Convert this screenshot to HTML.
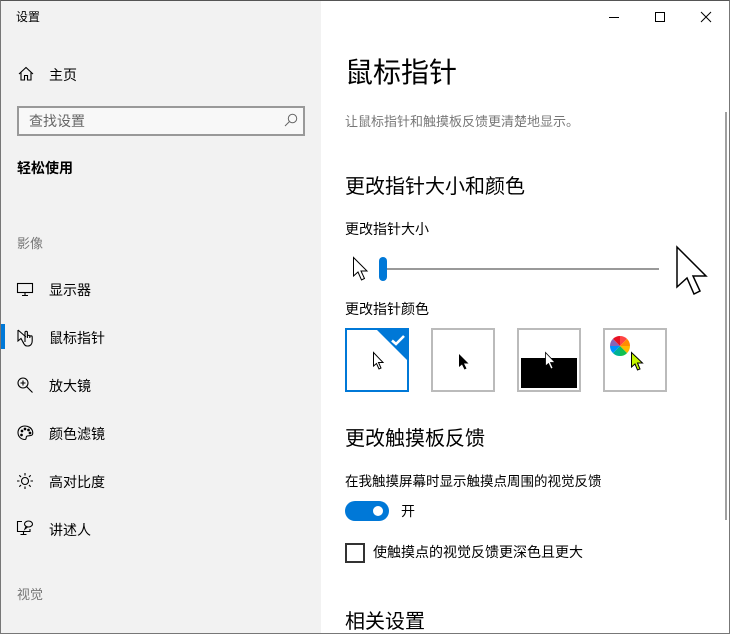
<!DOCTYPE html>
<html><head><meta charset="utf-8"><style>
*{margin:0;padding:0;box-sizing:border-box}
body{width:730px;height:634px;overflow:hidden;font-family:"Liberation Sans","Noto Sans CJK SC",sans-serif;color:#000;background:#fff;position:relative}
.frame{position:absolute;left:0;top:0;width:730px;height:634px;border:1px solid #777;border-top:1px solid #555}
.left{position:absolute;left:1px;top:1px;width:320px;height:632px;background:#f2f2f2}
.t{position:absolute;white-space:nowrap;line-height:1}
svg{position:absolute;overflow:visible}
</style></head><body>
<div class="left"></div>
<div class="t" style="left:16px;top:11px;font-size:12px">设置</div>
<svg style="left:18px;top:66px" width="16" height="16" viewBox="0 0 16 16" fill="none" stroke="#000" stroke-width="1.1"><path d="M1 8L8 1.5L15 8M3 6.5V14H6.5V9.5H9.5V14H13V6.5"/></svg>
<div class="t" style="left:49px;top:68px;font-size:14px">主页</div>
<div style="position:absolute;left:17px;top:106px;width:288px;height:30px;border:2px solid #999;background:#f8f8f8"></div>
<div class="t" style="left:29px;top:114px;font-size:14px;color:#666">查找设置</div>
<svg style="left:284px;top:113px" width="14" height="14" viewBox="0 0 14 14" fill="none" stroke="#666" stroke-width="1"><circle cx="8.5" cy="5.5" r="4.2"/><path d="M5.5 8.5L1 13"/></svg>
<div class="t" style="left:17px;top:161px;font-size:14px;font-weight:bold">轻松使用</div>
<div class="t" style="left:17px;top:237px;font-size:13px;color:#777">影像</div>
<svg style="left:17px;top:283px" width="17" height="14" viewBox="0 0 17 14" fill="none" stroke="#000" stroke-width="1.1"><rect x="0.5" y="0.5" width="15" height="9"/><path d="M8 9.5V12.5M5 12.5H11"/></svg>
<div class="t" style="left:49px;top:283px;font-size:14px">显示器</div>
<div style="position:absolute;left:1px;top:324px;width:4px;height:25px;background:#0078d7"></div>
<svg style="left:17px;top:329px" width="18" height="18" viewBox="0 0 18 18" fill="none" stroke="#000" stroke-width="1.1"><path d="M1 1L1 12L4 9.5L6.5 14M1 1L9 8"/><path d="M8 13V3.5A1.2 1.2 0 0 1 10.4 3.5V9M10.4 7.5A1.2 1.2 0 0 1 12.8 7.5V9M12.8 8A1.2 1.2 0 0 1 15.2 8V12C15.2 15 13.5 17 11 17H10C8.5 17 7 15.5 6 13"/></svg>
<div class="t" style="left:49px;top:331px;font-size:14px">鼠标指针</div>
<svg style="left:17px;top:377px" width="17" height="17" viewBox="0 0 17 17" fill="none" stroke="#000" stroke-width="1.1"><circle cx="6" cy="6" r="5"/><path d="M9.5 9.5L15.5 15.5M6 3.5V8.5M3.5 6H8.5"/></svg>
<div class="t" style="left:49px;top:379px;font-size:14px">放大镜</div>
<svg style="left:17px;top:425px" width="17" height="16" viewBox="0 0 17 16" fill="none" stroke="#000" stroke-width="1.1"><path d="M8 1C3.5 1 1 4 1 7.5C1 11 3.5 14.5 8 14.5C9.5 14.5 9 12.5 9.5 11.5C10 10.5 12 11 14 10.5C16 10 16 8 15.5 6C14.5 3 11.5 1 8 1Z"/><circle cx="5" cy="6" r="0.8" fill="#000"/><circle cx="8" cy="4" r="0.8" fill="#000"/><circle cx="11.5" cy="5" r="0.8" fill="#000"/><circle cx="4.5" cy="10" r="0.8" fill="#000"/><circle cx="13" cy="8" r="0.8" fill="#000"/></svg>
<div class="t" style="left:49px;top:427px;font-size:14px">颜色滤镜</div>
<svg style="left:17px;top:473px" width="16" height="16" viewBox="0 0 16 16" fill="none" stroke="#000" stroke-width="1.1"><circle cx="8" cy="8" r="3.5"/><path d="M8 0V2.5M8 13.5V16M0 8H2.5M13.5 8H16M2.3 2.3L4 4M12 12L13.7 13.7M13.7 2.3L12 4M4 12L2.3 13.7"/></svg>
<div class="t" style="left:49px;top:475px;font-size:14px">高对比度</div>
<svg style="left:17px;top:520px" width="17" height="17" viewBox="0 0 17 17" fill="none" stroke="#000" stroke-width="1.1"><path d="M5 1.5H0.5V11.5H13V9"/><path d="M6.5 11.5V14.5M3.5 14.5H9.5"/><ellipse cx="11.5" cy="4" rx="4" ry="3"/><path d="M9 6.5L8 9L10.5 7"/></svg>
<div class="t" style="left:49px;top:523px;font-size:14px">讲述人</div>
<div class="t" style="left:17px;top:588px;font-size:13px;color:#777">视觉</div>

<div style="position:absolute;left:609px;top:17px;width:10px;height:1px;background:#000"></div>
<div style="position:absolute;left:655px;top:12px;width:10px;height:10px;border:1px solid #000"></div>
<svg style="left:701px;top:12px" width="10" height="10" viewBox="0 0 10 10" stroke="#000" stroke-width="1"><path d="M0 0L10 10M10 0L0 10"/></svg>
<div style="position:absolute;left:725px;top:112px;width:2px;height:408px;background:#a0a0a0"></div>

<div class="t" style="left:345px;top:59px;font-size:28px">鼠标指针</div>
<div class="t" style="left:345px;top:115px;font-size:13px;color:#777">让鼠标指针和触摸板反馈更清楚地显示。</div>
<div class="t" style="left:345px;top:177px;font-size:20px">更改指针大小和颜色</div>
<div class="t" style="left:345px;top:222px;font-size:14px">更改指针大小</div>
<svg style="left:353px;top:257px" width="16" height="24" viewBox="0 0 16 24" fill="#fff" stroke="#000" stroke-width="1"><path d="M0.5 0.5V19L5 15L8.5 23L11.5 21.5L8 14H14Z"/></svg>
<div style="position:absolute;left:383px;top:268px;width:276px;height:2px;background:#999"></div>
<div style="position:absolute;left:379px;top:257px;width:8px;height:24px;border-radius:4px;background:#0078d7"></div>
<svg style="left:676px;top:246px" width="32" height="50" viewBox="0 0 32 50" fill="#fff" stroke="#000" stroke-width="1.5"><path d="M1 1V41L11 32L18 48L24 45L17 30H30Z"/></svg>
<div class="t" style="left:345px;top:302px;font-size:14px">更改指针颜色</div>
<div style="position:absolute;left:345px;top:328px;width:64px;height:64px;border:2px solid #0078d7;background:#fff;overflow:hidden">
<div style="position:absolute;left:28px;top:-2px;width:0;height:0;border-top:34px solid #0078d7;border-left:34px solid transparent"></div>
<svg style="left:44px;top:5px" width="14" height="11" viewBox="0 0 14 11" fill="none" stroke="#fff" stroke-width="2.6"><path d="M1 5.5L5 9L13 1"/></svg>
<svg style="left:26px;top:22px" width="12" height="18" viewBox="0 0 12 18" fill="#fff" stroke="#000" stroke-width="1"><path d="M0.5 0.5V14L3.5 11.5L6 17L8 16L5.5 10.5H10Z"/></svg>
</div>
<div style="position:absolute;left:431px;top:328px;width:64px;height:64px;border:2px solid #bbb;background:#fff">
<svg style="left:26px;top:24px" width="12" height="16" viewBox="0 0 12 16"><path d="M0 0V13L3 10.5L5.5 15.5L7.5 14.5L5 9.5H9.5Z" fill="#000"/></svg>
</div>
<div style="position:absolute;left:517px;top:328px;width:64px;height:64px;border:2px solid #bbb;background:#fff">
<div style="position:absolute;left:2px;top:28px;width:56px;height:30px;background:#000"></div>
<svg style="left:26px;top:22px" width="12" height="18" viewBox="0 0 12 18" fill="#fff" stroke="#000" stroke-width="0.8"><path d="M0.5 0.5V14L3.5 11.5L6 17L8 16L5.5 10.5H10Z"/></svg>
</div>
<div style="position:absolute;left:603px;top:328px;width:64px;height:64px;border:2px solid #bbb;background:#fff">
<svg style="left:5px;top:6px" width="20" height="20" viewBox="-10 -10 20 20">
<path d="M0 0L0 -10A10 10 0 0 1 7.07 -7.07Z" fill="#f44"/>
<path d="M0 0L7.07 -7.07A10 10 0 0 1 10 0Z" fill="#ff8c00"/>
<path d="M0 0L10 0A10 10 0 0 1 7.07 7.07Z" fill="#ffb900"/>
<path d="M0 0L7.07 7.07A10 10 0 0 1 0 10Z" fill="#10c050"/>
<path d="M0 0L0 10A10 10 0 0 1 -7.07 7.07Z" fill="#00b294"/>
<path d="M0 0L-7.07 7.07A10 10 0 0 1 -10 0Z" fill="#0090ff"/>
<path d="M0 0L-10 0A10 10 0 0 1 -7.07 -7.07Z" fill="#8764b8"/>
<path d="M0 0L-7.07 -7.07A10 10 0 0 1 0 -10Z" fill="#e81123"/>
</svg>
<svg style="left:26px;top:22px" width="14" height="20" viewBox="0 0 14 20" fill="#c6f500" stroke="#000" stroke-width="1"><path d="M0.5 0.5V15L4 12L6.5 18L9 17L6.5 11H11.5Z"/></svg>
</div>
<div class="t" style="left:345px;top:429px;font-size:20px">更改触摸板反馈</div>
<div class="t" style="left:345px;top:475px;font-size:13.5px">在我触摸屏幕时显示触摸点周围的视觉反馈</div>
<div style="position:absolute;left:345px;top:501px;width:44px;height:20px;border-radius:10px;background:#0078d7"></div>
<div style="position:absolute;left:373px;top:506px;width:10px;height:10px;border-radius:5px;background:#fff"></div>
<div class="t" style="left:401px;top:504px;font-size:14px">开</div>
<div style="position:absolute;left:345px;top:543px;width:20px;height:20px;border:2px solid #333"></div>
<div class="t" style="left:373px;top:545px;font-size:14px">使触摸点的视觉反馈更深色且更大</div>
<div class="t" style="left:345px;top:612px;font-size:20px">相关设置</div>
<div class="frame"></div>
</body></html>
